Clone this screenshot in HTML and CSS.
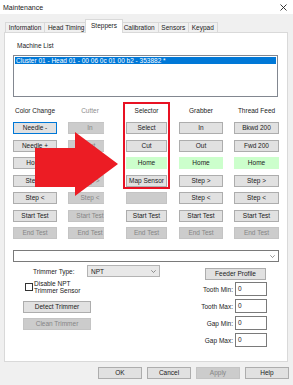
FILE: index.html
```html
<!DOCTYPE html>
<html lang="en">
<head>
    <meta charset="UTF-8">
    <title>Maintenance</title>
    <link rel="stylesheet" href="styles.css">
</head>
<body>
    <div class="titlebar">
        <span class="title">Maintenance</span>
        <svg class="close" width="7" height="7" viewBox="0 0 7 7" fill="none" stroke="#222" stroke-width="0.9">
            <path d="M0.5 0.5 6.5 6.5M6.5 0.5 0.5 6.5"/>
        </svg>
    </div>

    <div class="tabs">
        <div class="tab">Information</div>
        <div class="tab">Head Timing</div>
        <div class="tab active">Steppers</div>
        <div class="tab">Calibration</div>
        <div class="tab">Sensors</div>
        <div class="tab">Keypad</div>
    </div>

    <div class="panel">
        <div class="list-label">Machine List</div>
        <div class="listbox">
            <div class="list-item selected">Cluster 01 - Head 01 - 00 06 0c 01 00 b2 - 353882 *</div>
        </div>

        <div class="motors">
            <div class="col col-color">
                <div class="col-header">Color Change</div>
                <div class="btn focus">Needle -</div>
                <div class="btn">Needle +</div>
                <div class="btn">Home</div>
                <div class="btn">Step &gt;</div>
                <div class="btn">Step &lt;</div>
                <div class="btn">Start Test</div>
                <div class="btn off">End Test</div>
            </div>

            <div class="col col-cutter">
                <div class="col-header muted">Cutter</div>
                <div class="btn off">In</div>
                <div class="btn off">Out</div>
                <div class="btn off">Home</div>
                <div class="btn off">Step &gt;</div>
                <div class="btn off">Step &lt;</div>
                <div class="btn off">Start Test</div>
                <div class="btn off">End Test</div>
            </div>

            <div class="col col-selector">
                <div class="highlight">
                    <div class="col-header">Selector</div>
                    <div class="btn">Select</div>
                    <div class="btn">Cut</div>
                    <div class="btn home">Home</div>
                    <div class="btn">Map Sensor</div>
                </div>
                <div class="btn off"></div>
                <div class="btn">Start Test</div>
                <div class="btn off">End Test</div>
            </div>

            <div class="col col-grabber">
                <div class="col-header">Grabber</div>
                <div class="btn">In</div>
                <div class="btn">Out</div>
                <div class="btn home">Home</div>
                <div class="btn">Step &gt;</div>
                <div class="btn">Step &lt;</div>
                <div class="btn">Start Test</div>
                <div class="btn off">End Test</div>
            </div>

            <div class="col col-feed">
                <div class="col-header">Thread Feed</div>
                <div class="btn">Bkwd 200</div>
                <div class="btn">Fwd 200</div>
                <div class="btn home">Home</div>
                <div class="btn">Step &gt;</div>
                <div class="btn">Step &lt;</div>
                <div class="btn">Start Test</div>
                <div class="btn off">End Test</div>
            </div>
        </div>

        <div class="combo wide">
            <span></span>
            <svg class="chevron" width="5" height="3" viewBox="0 0 5 3" fill="none" stroke="#666" stroke-width="0.7"><path d="M0.3 0.3 2.5 2.5 4.7 0.3"/></svg>
        </div>

        <div class="trimmer">
            <div class="trim-left">
                <div class="trim-row">
                    <span class="trim-label">Trimmer Type:</span>
                    <div class="combo list">
                        <span>NPT</span>
                        <svg class="chevron" width="5" height="3" viewBox="0 0 5 3" fill="none" stroke="#666" stroke-width="0.7"><path d="M0.3 0.3 2.5 2.5 4.7 0.3"/></svg>
                    </div>
                </div>
                <div class="check-row">
                    <span class="checkbox"></span>
                    <span class="check-label">Disable NPT<br>Trimmer Sensor</span>
                </div>
                <div class="btn trim-btn detect">Detect Trimmer</div>
                <div class="btn trim-btn off">Clean Trimmer</div>
            </div>

            <div class="trim-right">
                <div class="btn feeder">Feeder Profile</div>
                <div class="field"><span>Tooth Min:</span><div class="input">0</div></div>
                <div class="field"><span>Tooth Max:</span><div class="input">0</div></div>
                <div class="field"><span>Gap Min:</span><div class="input">0</div></div>
                <div class="field"><span>Gap Max:</span><div class="input">0</div></div>
            </div>
        </div>
    </div>

    <div class="dialog-buttons">
        <div class="btn">OK</div>
        <div class="btn">Cancel</div>
        <div class="btn off">Apply</div>
        <div class="btn">Help</div>
    </div>

    <svg class="arrow" width="84" height="65" viewBox="0 0 84 65">
        <polygon points="0,16 40,16 40,0 83,32 40,64 40,55 0,55" fill="#ec1c24"/>
    </svg>
</body>
</html>
```

FILE: styles.css
```css
* {
    box-sizing: border-box;
    margin: 0;
    padding: 0;
}

body {
    position: relative;
    width: 293px;
    height: 385px;
    overflow: hidden;
    background: #f0f0f0;
    color: #1a1a1a;
    font-family: "Liberation Sans", Arial, sans-serif;
    font-size: 6.5px;
}

/* window chrome */
.titlebar {
    height: 14px;
    display: flex;
    align-items: center;
    justify-content: space-between;
    padding: 0 6px 0 3px;
    background: #fff;
}

.title {
    font-size: 7px;
}

.tabs {
    position: relative;
    z-index: 1;
    display: flex;
    align-items: flex-end;
    height: 13px;
    margin-top: 5px;
    padding-left: 6px;
}

.tab {
    height: 10px;
    line-height: 9px;
    margin-left: -1px;
    padding: 0 2.8px;
    border: 1px solid #d9d9d9;
    border-bottom: none;
    background: #f0f0f0;
    white-space: nowrap;
}

.tab.active {
    position: relative;
    height: 14px;
    line-height: 12px;
    margin: 0 -2px -1px -3px;
    padding: 0 4.8px;
    background: #fff;
}

.panel {
    height: 330px;
    margin: 0 5px 0 4px;
    padding: 9px 0 0 8px;
    background: #fff;
    border: 1px solid #d9d9d9;
}

.list-label {
    line-height: 8px;
    margin-left: 4px;
}

.listbox {
    width: 265px;
    height: 42px;
    margin-top: 5px;
    padding: 1px;
    border: 1px solid #828790;
}

.list-item {
    height: 7px;
    line-height: 7px;
    padding-left: 1px;
    white-space: nowrap;
}

.list-item.selected {
    background: #0078d7;
    color: #fff;
}

/* stepper columns */
.motors {
    display: flex;
    align-items: flex-start;
    margin-top: 5px;
}

.col {
    display: flex;
    flex-direction: column;
    gap: 5.5px;
    width: 44px;
    padding-top: 2px;
}

.col-header {
    height: 12.5px;
    padding-top: 2px;
    line-height: 10px;
    text-align: center;
    white-space: nowrap;
}

.muted {
    color: #8d8d8d;
}

.col-cutter {
    width: 36px;
    margin-left: 11px;
    overflow: hidden;
}

.col-cutter > * {
    width: 44px;
    flex-shrink: 0;
}

.col-selector {
    width: 47px;
    margin-left: 19px;
    padding: 0 3px;
}

.highlight {
    display: flex;
    flex-direction: column;
    gap: 5.5px;
    margin: 0 -3px -2px;
    padding: 0 1px;
    border: 2px solid #e81123;
}

.col-grabber {
    margin-left: 9px;
}

.col-feed {
    width: 45px;
    margin-left: 11px;
}

.btn {
    height: 12px;
    line-height: 10px;
    border: 1px solid #adadad;
    background: #e1e1e1;
    text-align: center;
    white-space: nowrap;
}

.btn.focus {
    border-color: #0078d7;
}

.btn.off {
    border-color: #c4c4c4;
    background: #cccccc;
    color: #858585;
}

.btn.home {
    border-color: #ccffcc;
    background: #ccffcc;
}

/* trimmer area */
.combo {
    display: flex;
    align-items: center;
    justify-content: space-between;
    height: 12px;
    padding: 0 3px 0 3px;
}

.combo.wide {
    width: 266px;
    margin-top: 11px;
    border: 1px solid #7a7a7a;
    background: #fff;
}

.combo.list {
    width: 73px;
    border: 1px solid #b3b3b3;
    background: #e8e8e8;
}

.trimmer {
    display: flex;
    margin-top: 3px;
}

.trim-row {
    display: flex;
    align-items: center;
    height: 12px;
}

.trim-label {
    width: 54px;
    margin-left: 20px;
}

.check-row {
    display: flex;
    align-items: center;
    height: 14px;
    margin-top: 3px;
}

.checkbox {
    width: 8px;
    height: 8px;
    margin-left: 12px;
    border: 1px solid #333;
    background: #fff;
}

.check-label {
    margin-left: 1px;
    line-height: 7px;
}

.trim-btn {
    width: 68px;
    margin: 5px 0 0 10px;
}

.trim-btn.detect {
    margin-top: 7px;
}

.trim-right {
    display: flex;
    flex-direction: column;
    align-items: flex-end;
    gap: 3px;
    margin: 0 20px 0 auto;
}

.feeder {
    width: 61px;
    margin: 3px 1px -1px 0;
}

.field {
    display: flex;
    align-items: center;
    gap: 2px;
    height: 14px;
}

.input {
    width: 32px;
    height: 14px;
    line-height: 12px;
    padding-left: 2px;
    border: 1px solid #7a7a7a;
    background: #fff;
}

.dialog-buttons {
    display: flex;
    justify-content: flex-end;
    gap: 5px;
    margin-top: 5px;
    padding-right: 4px;
}

.dialog-buttons .btn {
    width: 44px;
}

/* annotation drawn over the dialog */
.arrow {
    position: absolute;
    left: 35px;
    top: 132px;
}
```
